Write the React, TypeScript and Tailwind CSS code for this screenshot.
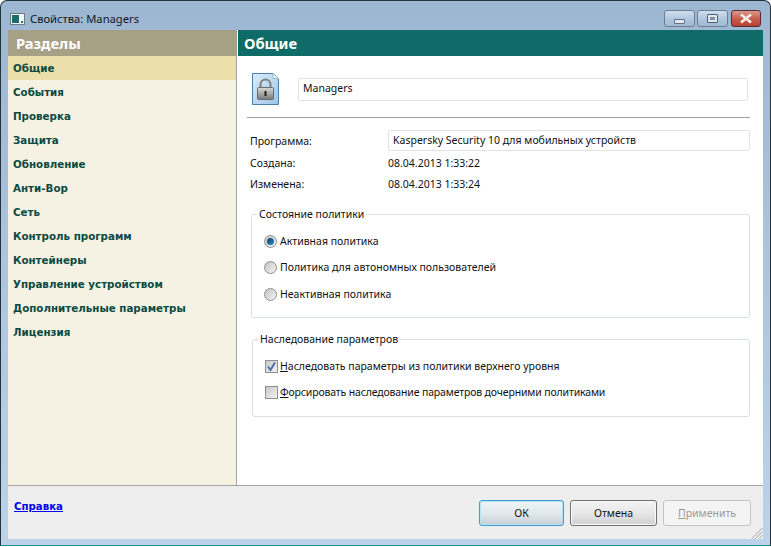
const sections = [
  "Общие",
  "События",
  "Проверка",
  "Защита",
  "Обновление",
  "Анти-Вор",
  "Сеть",
  "Контроль программ",
  "Контейнеры",
  "Управление устройством",
  "Дополнительные параметры",
  "Лицензия",
]

function CaptionButton({ kind }: { kind: "min" | "max" | "close" }) {
  if (kind === "close") {
    return (
      <div className="w-[30px] h-[17px] rounded-[3px] border border-[#5b2a35] bg-gradient-to-b from-[#d99a8e] via-[#c9604f] to-[#b8402f] flex items-center justify-center">
        <svg width="14" height="11" viewBox="0 0 14 11">
          <path d="M2 1.5 L12 9.5 M12 1.5 L2 9.5" stroke="#f1ece8" strokeWidth="2.8" />
        </svg>
      </div>
    )
  }
  return (
    <div className="w-[31px] h-[17px] rounded-[3px] border border-[#6d7f95] bg-gradient-to-b from-[#cfdeee] via-[#b3c8df] to-[#a0b8d3] flex items-center justify-center">
      {kind === "min" ? (
        <div className="w-[11px] h-[5px] mt-[5px] bg-[#e4e9ef] border border-[#5f7087] rounded-[1px]" />
      ) : (
        <div className="w-[11px] h-[9px] bg-[#dfe6ee] border border-[#4d5f78] rounded-[1px] flex items-center justify-center">
          <div className="w-[5px] h-[3px] bg-[#7e90a8]" />
        </div>
      )}
    </div>
  )
}

function Radio({ checked, label }: { checked?: boolean; label: string }) {
  return (
    <div className="flex items-center gap-[3px] h-[14px]">
      <div className="w-[13px] h-[13px] rounded-full border border-[#8e8f8f] bg-gradient-to-br from-[#c4c4c4] to-[#f4f4f4] flex items-center justify-center">
        {checked && <div className="w-[7px] h-[7px] rounded-full bg-gradient-to-br from-[#123f66] to-[#2a8fc6]" />}
      </div>
      <span>{label}</span>
    </div>
  )
}

function Check({ checked, hotkey, rest, className }: { checked?: boolean; hotkey: string; rest: string; className?: string }) {
  return (
    <div className="flex items-center gap-[2px] h-[14px]">
      <div className="w-[13px] h-[13px] border border-[#8e8f8f] bg-gradient-to-br from-[#c8c8c8] to-[#f4f4f4] flex items-center justify-center">
        {checked && (
          <svg width="11" height="11" viewBox="0 0 11 11">
            <path d="M2 5.5 L4.5 9 L9 1.5" fill="none" stroke="#4a6fa8" strokeWidth="1.9" />
          </svg>
        )}
      </div>
      <span className={className}>
        <span className="underline">{hotkey}</span>
        {rest}
      </span>
    </div>
  )
}

function LockIcon() {
  return (
    <svg width="27" height="32" viewBox="0 0 27 32">
      <defs>
        <linearGradient id="page" x1="0" y1="0" x2="1" y2="1">
          <stop offset="0" stopColor="#dcecf9" />
          <stop offset="1" stopColor="#9cc6ea" />
        </linearGradient>
        <linearGradient id="lock" x1="0" y1="0" x2="0" y2="1">
          <stop offset="0" stopColor="#d8d8d6" />
          <stop offset="1" stopColor="#77797a" />
        </linearGradient>
      </defs>
      <path d="M0.5 0.5 H21 L26.5 5.5 V31.5 H0.5 Z" fill="url(#page)" stroke="#4f7fa8" />
      <path d="M21 0.5 V5.5 H26.5 Z" fill="#f4f8fc" stroke="#9db8d0" />
      <path d="M8.5 15 V11.5 A5 5 0 0 1 18.5 11.5 V15" fill="none" stroke="#7d8082" strokeWidth="2" />
      <rect x="5.5" y="14.5" width="16" height="12" rx="1" fill="url(#lock)" stroke="#6a6c6e" />
      <rect x="12.5" y="18" width="2" height="5" fill="#1c1c1c" />
    </svg>
  )
}

function Button({ children, variant, className }: { children: React.ReactNode; variant: "default" | "normal" | "disabled"; className: string }) {
  const cls =
    variant === "default"
      ? "border-[#3c9fd0] bg-gradient-to-b from-[#eef5f9] via-[#e3eaee] to-[#c8d0d5] text-[#111] shadow-[inset_0_0_0_1px_#b7e3f6]"
      : variant === "normal"
        ? "border-[#707070] bg-gradient-to-b from-[#f3f3f3] via-[#e8e8e8] to-[#d0d0d0] text-[#111] shadow-[inset_0_0_0_1px_#fafafa]"
        : "border-[#c4c4c4] bg-[#f4f4f4] text-[#9a9a9a]"
  return (
    <div className={`h-[26px] rounded-[3px] border flex items-center justify-center ${cls} ${className}`}>{children}</div>
  )
}

function Group({ title, className, children }: { title: string; className: string; children: React.ReactNode }) {
  return (
    <div className={`relative border border-[#d8dfe5] rounded-[3px] ${className}`}>
      <span className="absolute left-[5px] top-[-8px] bg-white px-[2px] leading-[14px]">{title}</span>
      {children}
    </div>
  )
}

export default function App() {
  return (
    <div
      className="w-[771px] h-[547px] overflow-hidden bg-white pb-px text-[#111] text-[10.5px] leading-[14px]"
      style={{ fontFamily: '"Noto Sans", sans-serif' }}
    >
      <div className="h-full flex flex-col rounded-t-[7px] border border-[#25333b] border-b-[#1d8a94] bg-gradient-to-b from-[#9db6d2] to-[#bcd3ea] px-[7px] pb-[6px]">
        {/* title bar */}
        <div className="h-[29px] shrink-0 flex">
          <div className="flex items-center gap-[5px] pl-[2px] pt-[7px]">
            <svg width="15" height="12" viewBox="0 0 15 12">
              <rect x="0.5" y="0.5" width="14" height="11" fill="#eef2f4" stroke="#6d7b84" />
              <rect x="2" y="2" width="7" height="8" fill="#1f6b68" />
              <rect x="9" y="2" width="4" height="6" fill="#fdfdfd" />
              <rect x="11" y="8" width="2" height="2" fill="#57636b" />
            </svg>
            <span className="text-[11.2px] text-[#10181f]">Свойства: Managers</span>
          </div>
          <div className="ml-auto flex pt-[9px] pr-[1px]">
            <CaptionButton kind="min" />
            <div className="ml-[2px] mr-[3px]">
              <CaptionButton kind="max" />
            </div>
            <div className="mr-px">
              <CaptionButton kind="close" />
            </div>
          </div>
        </div>

        {/* body */}
        <div className="flex-1 flex flex-col bg-white min-h-0">
          <div className="flex-1 flex min-h-0">
            <div className="w-[229px] shrink-0 flex flex-col bg-[#f5f2e4] border-r border-[#a3a3a3] font-bold">
              <div className="h-[26px] mr-[-1px] bg-[#a6a087] text-white text-[14.7px] flex items-center pl-[8px]">
                Разделы
              </div>
              <div className="flex flex-col" style={{ fontFamily: '"DejaVu Sans", sans-serif' }}>
                {sections.map((name, i) => (
                  <div
                    key={name}
                    className={`h-[24px] flex items-center pl-[5px] text-[10.3px] text-[#0b4a41] ${i === 0 ? "bg-[#ebdfac]" : ""}`}
                  >
                    {name}
                  </div>
                ))}
              </div>
            </div>

            <div className="flex-1 flex flex-col min-w-0">
              <div className="h-[26px] shrink-0 ml-px bg-[#0f6b68] text-white text-[14.7px] font-bold flex items-center pl-[6px]">
                Общие
              </div>

              <div className="flex-1 pl-[10px] pr-[13px]">
                <div className="flex items-center pl-[5px] pt-[5px] h-[61px]">
                  <LockIcon />
                  <div className="ml-[19px] w-[450px] h-[23px] border border-[#dfe3e8] rounded-[2px] flex items-center pl-[4px] pb-[2px]">
                    Managers
                  </div>
                </div>
                <div className="h-px bg-[#a0a0a0] mb-[12px]" />

                <div className="flex items-center pl-[3px] h-[21px]">
                  <span className="w-[138px]">Программа:</span>
                  <div className="w-[362px] h-[21px] border border-[#dfe3e8] rounded-[2px] flex items-center pl-[4px] pb-[2px]">
                    Kaspersky Security 10 для мобильных устройств
                  </div>
                </div>
                <div className="flex items-center pl-[3px] pt-px h-[22px]">
                  <span className="w-[138px]">Создана:</span>
                  <span>08.04.2013 1:33:22</span>
                </div>
                <div className="flex items-center pl-[3px] h-[22px]">
                  <span className="w-[138px]">Изменена:</span>
                  <span>08.04.2013 1:33:24</span>
                </div>

                <Group title="Состояние политики" className="mt-[19px] ml-[4px] w-[499px] h-[104px] pl-[12px] pt-[19px]">
                  <div className="flex flex-col gap-[12px]">
                    <Radio checked label="Активная политика" />
                    <Radio label="Политика для автономных пользователей" />
                    <div className="mt-px">
                      <Radio label="Неактивная политика" />
                    </div>
                  </div>
                </Group>

                <Group title="Наследование параметров" className="mt-[21px] ml-[5px] w-[498px] h-[78px] pl-[12px] pt-[19px]">
                  <div className="flex flex-col gap-[12px]">
                    <Check checked hotkey="Н" rest="аследовать параметры из политики верхнего уровня" />
                    <Check
                      hotkey="Ф"
                      rest="орсировать наследование параметров дочерними политиками"
                      className="tracking-[-0.15px]"
                    />
                  </div>
                </Group>
              </div>
            </div>
          </div>

          {/* footer */}
          <div className="relative h-[54px] shrink-0 flex items-start border-t border-[#a3a3a3] bg-[#eeeeee] pl-[6px] pr-[12px]">
            <a
              className="mt-[14px] text-[10.2px] font-bold text-[#0000ee] underline"
              style={{ fontFamily: '"DejaVu Sans", sans-serif' }}
            >
              Справка
            </a>
            <div className="ml-auto mt-[14px] flex gap-[6px]">
              <Button variant="default" className="w-[85px]">ОК</Button>
              <Button variant="normal" className="w-[87px]">Отмена</Button>
              <Button variant="disabled" className="w-[88px]">
                <span>
                  <span className="underline">П</span>рименить
                </span>
              </Button>
            </div>
            <svg className="absolute right-0 bottom-0" width="12" height="12" viewBox="0 0 12 12">
              <path d="M11.5 1 L1 11.5 M11.5 4.5 L4.5 11.5 M11.5 8 L8 11.5" stroke="#a5a5a5" fill="none" />
            </svg>
          </div>
        </div>
      </div>
    </div>
  )
}
